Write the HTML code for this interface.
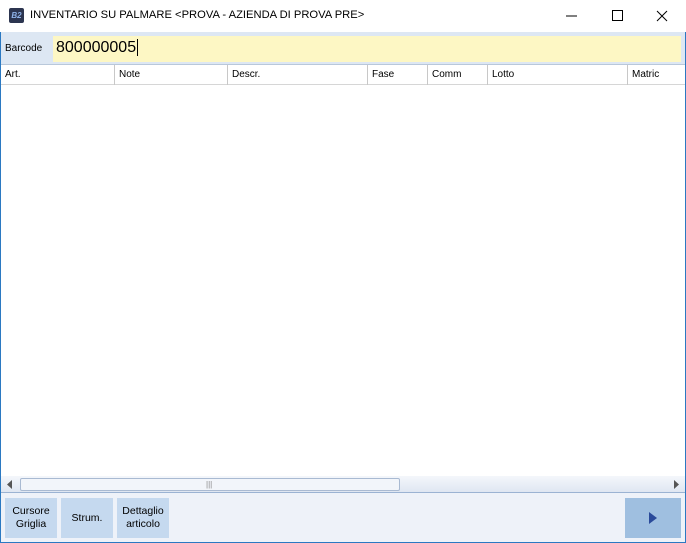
<!DOCTYPE html>
<html><head><style>
*{margin:0;padding:0;box-sizing:border-box}
body{width:686px;height:543px;overflow:hidden;background:#fff;font-family:"Liberation Sans",sans-serif;position:relative}
.win{position:absolute;left:0;top:0;width:686px;height:543px;border:1px solid #2b79c2;background:#fff}
.title{position:absolute;left:-1px;top:-1px;width:686px;height:32px;background:#fff}
.title .t{position:absolute;left:30px;top:9px;font-size:11.2px;color:#000}
.logo{position:absolute;left:9px;top:8px;width:15px;height:15px;background:#2c3550;border-radius:2px;color:#8fb2e8;font-size:8px;font-style:italic;font-weight:bold;text-align:center;line-height:15px}
.bar{position:absolute;left:0;top:31px;width:684px;height:32px;background:#dde7f3}
.bar .l{position:absolute;left:4px;top:11px;font-size:10px}
.bc{position:absolute;left:52px;top:4px;width:628px;height:26px;background:#fdf7c4;font-size:16px;padding:3px 3px;color:#000}
.hdr{position:absolute;left:0;top:63px;width:684px;height:21px;border-top:1px solid #b9c8da;border-bottom:1px solid #d6d6d6;background:#fff}
.hdr div{position:absolute;top:0;height:20px;font-size:10px;padding:4px 4px;border-right:1px solid #c8c8c8}
.sb{position:absolute;left:0;top:475px;width:684px;height:17px;background:linear-gradient(#f4f7fb,#dfe7f2);border-bottom:1px solid #9bb3d3}
.thumb{position:absolute;left:19px;top:2px;width:380px;height:13px;border:1px solid #a9bad2;border-radius:2px;background:#f2f5fa}
.bot{position:absolute;left:0;top:492px;width:684px;height:49px;background:#eef2f9}
.btn{position:absolute;top:5px;height:40px;background:#c5d9ef;font-size:10.5px;text-align:center;display:flex;align-items:center;justify-content:center;line-height:13px}
</style></head><body>
<div class="win">
<div class="title"><div class="logo">B2</div><div class="t">INVENTARIO SU PALMARE &lt;PROVA - AZIENDA DI PROVA PRE&gt;</div>
<svg style="position:absolute;left:560px;top:8px" width="120" height="16"><line x1="6" y1="8" x2="17" y2="8" stroke="#000"/><rect x="52.5" y="2.5" width="10" height="10" fill="none" stroke="#000"/><path d="M97 3L107 13M107 3L97 13" stroke="#000"/></svg></div>
<div class="bar"><div class="l">Barcode</div><div class="bc">800000005<span style="border-left:1px solid #000;margin-left:1px"></span></div></div>
<div class="hdr">
<div style="left:0;width:114px">Art.</div><div style="left:114px;width:113px">Note</div><div style="left:227px;width:140px">Descr.</div><div style="left:367px;width:60px">Fase</div><div style="left:427px;width:60px">Comm</div><div style="left:487px;width:140px">Lotto</div><div style="left:627px;width:56px;border:none">Matric</div>
</div>
<div class="sb"><svg style="position:absolute;left:6px;top:4px" width="6" height="9"><path d="M5 0L0 4.5L5 9Z" fill="#555"/></svg><div class="thumb"><span style="position:absolute;left:185px;top:1px;font-size:8px;color:#888">|||</span></div><svg style="position:absolute;left:673px;top:4px" width="6" height="9"><path d="M0 0L5 4.5L0 9Z" fill="#555"/></svg></div>
<div class="bot">
<div class="btn" style="left:4px;width:52px">Cursore<br>Griglia</div>
<div class="btn" style="left:60px;width:52px">Strum.</div>
<div class="btn" style="left:116px;width:52px">Dettaglio<br>articolo</div>
<div class="btn" style="left:624px;width:56px;background:#9fbfe0"><svg width="8" height="12"><path d="M0 0L8 6L0 12Z" fill="#2a4a9a"/></svg></div>
</div>
</div>
</body></html>
